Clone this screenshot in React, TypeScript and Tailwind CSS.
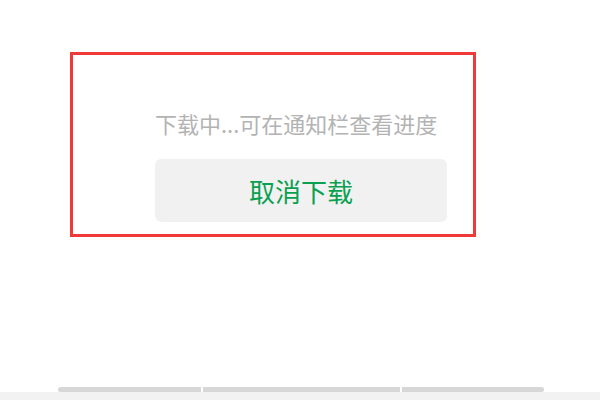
export default function App() {
  return (
    <div
      className="w-[600px] h-[400px] bg-white flex flex-col overflow-hidden"
      style={{ fontFamily: '"Noto Sans CJK SC", "Noto Sans", sans-serif' }}
    >
      {/* download dialog, outlined */}
      <div className="ml-[70px] mt-[52px] w-[406px] h-[185px] border-[3px] border-[#f03a3a] flex flex-col pl-[82px] pt-[53px]">
        <p className="text-[22px] leading-[30px] text-[#b3b3b3] whitespace-nowrap">
          下载中...可在通知栏查看进度
        </p>
        <button className="mt-[21px] w-[292px] h-[63px] rounded-[6px] bg-[#f1f1f1] flex items-center justify-center text-[26px] leading-none text-[#09a050]">
          取消下载
        </button>
      </div>

      {/* bottom tab strip */}
      <div className="mt-auto flex pl-[58px] gap-[2px]">
        <div className="w-[143px] h-[5px] bg-[#d7d7d7] rounded-l-full" />
        <div className="w-[197px] h-[5px] bg-[#d7d7d7]" />
        <div className="w-[142px] h-[5px] bg-[#d7d7d7] rounded-r-full" />
      </div>
      <div className="h-[8px] bg-[#f2f2f2]" />
    </div>
  )
}
